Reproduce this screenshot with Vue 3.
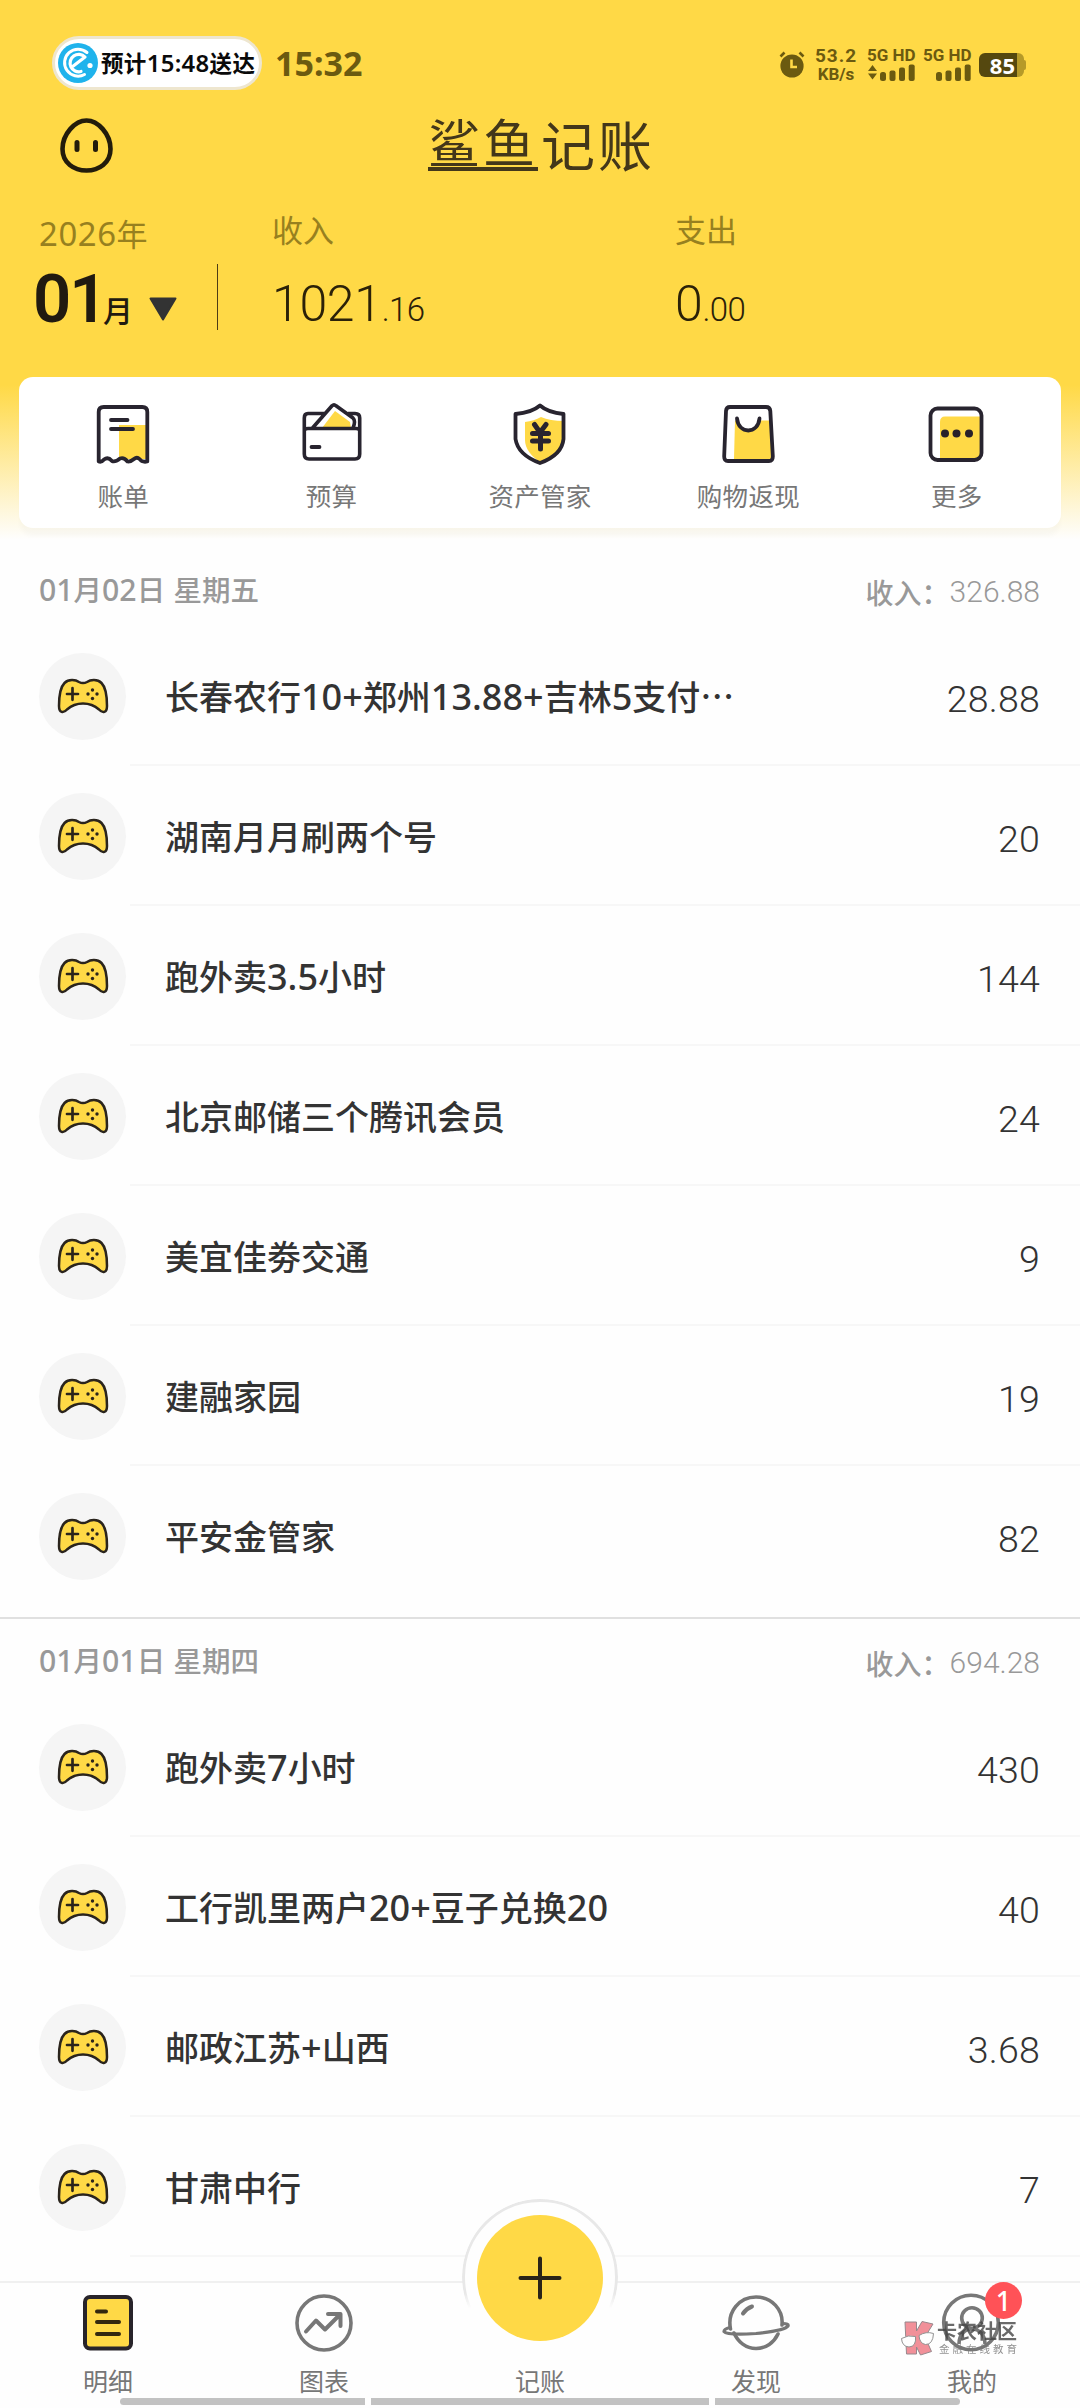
<script setup>
import { h } from 'vue'

// Splits mixed text so that digits and signs get the latin face.
const Mixed = (props) =>
  h(
    'span',
    { class: 'mixed' },
    props.text
      .split(/([0-9+.:]+)/)
      .filter(Boolean)
      .map((part) => (/^[0-9+.:]+$/.test(part) ? h('span', { class: 'latin' }, part) : part))
  )
Mixed.props = ['text']

const days = [
  {
    date: '01月02日 星期五',
    total: '326.88',
    rows: [
      ['长春农行10+郑州13.88+吉林5支付⋯', '28.88'],
      ['湖南月月刷两个号', '20'],
      ['跑外卖3.5小时', '144'],
      ['北京邮储三个腾讯会员', '24'],
      ['美宜佳劵交通', '9'],
      ['建融家园', '19'],
      ['平安金管家', '82'],
    ],
  },
  {
    date: '01月01日 星期四',
    total: '694.28',
    rows: [
      ['跑外卖7小时', '430'],
      ['工行凯里两户20+豆子兑换20', '40'],
      ['邮政江苏+山西', '3.68'],
      ['甘肃中行', '7'],
    ],
  },
]
</script>

<template>
  <div class="page">
    <header class="top">
      <div class="status">
        <div class="pill">
          <svg width="40" height="40" viewBox="0 0 40 40">
            <circle cx="20" cy="20" r="20" fill="#1fb3ec" />
            <path d="M29 9.500 A13.500 13.500 0 1 0 26.500 31.500" fill="none" stroke="#fff" stroke-width="3" stroke-linecap="round" />
            <path d="M14 24 L27 14 A8.700 8.700 0 1 0 23 28.500" fill="none" stroke="#fff" stroke-width="3.200" stroke-linecap="round" stroke-linejoin="round" />
            <circle cx="32" cy="22.500" r="2.600" fill="#fff" />
          </svg>
          <Mixed text="预计15:48送达" />
        </div>
        <span class="clock">15:32</span>
        <div class="sys">
          <svg width="26" height="27" viewBox="0 0 26 27">
            <circle cx="13" cy="15" r="11.600" fill="#6b5a10" />
            <path d="M1.500 5.500 L5.500 1.500 M24.500 5.500 L20.500 1.500" stroke="#6b5a10" stroke-width="2.600" />
            <path d="M12.500 8.500 V16 H18" fill="none" stroke="#ffd946" stroke-width="2.600" />
          </svg>
          <div class="speed"><span>53.2</span><span>KB/s</span></div>
          <div class="sim">
            <span>5G HD</span>
            <svg width="48" height="17" viewBox="0 0 48 17" fill="#6b5a10">
              <path d="M1 7 L5.500 1 L10 7Z M1 9.500 L5.500 15.500 L10 9.500Z" />
              <rect x="13" y="8" width="6" height="9" rx="2.500" />
              <rect x="22.500" y="6.500" width="6" height="10.500" rx="2" />
              <rect x="32" y="3.500" width="6" height="13.500" rx="2" />
              <rect x="41.700" y="0.500" width="6" height="16.500" rx="2" />
            </svg>
          </div>
          <div class="sim">
            <span>5G HD</span>
            <svg width="48" height="17" viewBox="0 0 48 17" fill="#6b5a10">
              <rect x="13" y="8" width="6" height="9" rx="2.500" />
              <rect x="22.500" y="6.500" width="6" height="10.500" rx="2" />
              <rect x="32" y="3.500" width="6" height="13.500" rx="2" />
              <rect x="41.700" y="0.500" width="6" height="16.500" rx="2" />
            </svg>
          </div>
          <div class="battery"><span>85</span><i></i></div>
        </div>
      </div>

      <div class="brand">
        <svg width="53" height="55" viewBox="0 0 53 55">
          <path d="M26.500 2.500 C38 2.500 50.500 16 50.500 31 C50.500 45 39 52.500 26.500 52.500 C14 52.500 2.500 45 2.500 31 C2.500 16 15 2.500 26.500 2.500Z" fill="none" stroke="#231c0b" stroke-width="4.600" />
          <path d="M17 24.500 V31.500 M35.500 24.500 V31.500" stroke="#231c0b" stroke-width="5" stroke-linecap="round" />
        </svg>
        <h1><span class="lined">鲨鱼</span><span>记账</span></h1>
      </div>

      <div class="summary">
        <div class="month">
          <div class="label"><Mixed text="2026年" /></div>
          <div class="pick">
            <b>01</b><em>月</em>
            <svg width="28" height="24" viewBox="0 0 28 24"><path d="M1.500 1.500 H26.500 L14 22.500Z" fill="#333" stroke="#333" stroke-width="2" stroke-linejoin="round" /></svg>
          </div>
        </div>
        <i class="rule"></i>
        <div class="sum income"><div class="label">收入</div><div class="val">1021<small>.16</small></div></div>
        <div class="sum"><div class="label">支出</div><div class="val">0<small>.00</small></div></div>
      </div>

      <div class="card">
        <div class="tool">
          <svg width="60" height="64" viewBox="0 0 60 64">
            <path d="M26 23 H53 V57 H26Z" fill="#ffd946" />
            <path d="M5.700 59.500 V10 Q5.700 5 10.700 5 H49.300 Q54.300 5 54.300 10 V59.500 Q49 60.500 46.500 57 Q44 54.500 41 57 Q37.500 60 34.500 59.500 Q31 55 27 56.500 Q22 60.500 19 59 Q15 54.500 11 57.500 Q8.500 60.500 5.700 59.500Z" fill="none" stroke="#28242f" stroke-width="3.800" stroke-linejoin="round" />
            <path d="M18 18 H34.500 M18 27 H40" stroke="#28242f" stroke-width="3.800" stroke-linecap="round" />
          </svg>
          <span>账单</span>
        </div>
        <div class="tool">
          <svg width="60" height="64" viewBox="0 0 60 64">
            <path d="M20 26 L33 9 L48 20 L49 26Z" fill="#ffd946" />
            <path d="M10.500 26 L30 3.800 Q32 1.800 34 3.800 L51 16 Q54 19 51 26 M24 11.500 H6 Q2.300 11.500 2.300 16 V52 Q2.300 57 7 57 H53 Q57.700 57 57.700 52 V16 Q57.700 11.500 53 11.500 H46 M2.300 29 Q2.300 26.500 6 26.500 H54 Q57.700 26.500 57.700 29" fill="none" stroke="#28242f" stroke-width="3.600" stroke-linejoin="round" />
            <path d="M9.500 45 H17.500" stroke="#28242f" stroke-width="3.800" stroke-linecap="round" />
          </svg>
          <span>预算</span>
        </div>
        <div class="tool">
          <svg width="60" height="64" viewBox="0 0 60 64">
            <path d="M15 20 Q24 19 31 15 Q40 19 54 19 V36 Q53 54 31 61 Q15 50 15 38Z" fill="#ffd946" />
            <path d="M30 3.500 Q38 10.500 53.500 12 V37 Q52 53 30 61 Q8 53 5.500 37 V12 Q22 10.500 30 3.500Z" fill="none" stroke="#28242f" stroke-width="3.800" stroke-linejoin="round" />
            <path d="M24.500 22.500 L30 30.500 L36 22.500 M22.500 31.500 H38.500 M22.500 39 H38.500 M30.500 31 V47" fill="none" stroke="#28242f" stroke-width="5" stroke-linecap="round" />
          </svg>
          <span>资产管家</span>
        </div>
        <div class="tool">
          <svg width="60" height="64" viewBox="0 0 60 64">
            <path d="M17 18.500 H52 L53.500 57 H16Z" fill="#ffd946" />
            <path d="M12 5 H48 Q52 5 52.300 9 L54.800 54 Q55 59 51 59 H10 Q6 59 6.200 54 L8 9 Q8.300 5 12 5Z" fill="none" stroke="#28242f" stroke-width="3.800" />
            <path d="M19 16.500 C20.500 32.500 40 32.500 41.500 16.500" fill="#fff" />
            <path d="M19 16.500 C20.500 32.500 40 32.500 41.500 16.500" fill="none" stroke="#28242f" stroke-width="3.800" stroke-linecap="round" />
          </svg>
          <span>购物返现</span>
        </div>
        <div class="tool">
          <svg width="60" height="64" viewBox="0 0 60 64">
            <path d="M13 57 V20 Q13 14.500 18 14.500 H54 V57Z" fill="#ffd946" />
            <rect x="3.500" y="6.500" width="51" height="51.500" rx="7" fill="none" stroke="#28242f" stroke-width="3.800" />
            <g fill="#28202a"><circle cx="18" cy="31.500" r="4" /><circle cx="29.500" cy="31.500" r="4" /><circle cx="42" cy="31.500" r="4" /></g>
          </svg>
          <span>更多</span>
        </div>
      </div>
    </header>

    <main>
      <section v-for="day in days" :key="day.date" class="day">
        <div class="head">
          <Mixed :text="day.date" />
          <div class="total"><span>收入：</span><b>{{ day.total }}</b></div>
        </div>
        <div v-for="row in day.rows" :key="row[0]" class="row">
          <div class="ava">
            <svg width="52" height="36" viewBox="0 0 52 36">
              <path d="M2 28 C2 18 3.500 9 7.500 5 C12 0.500 19 2 22 4 Q26 6.200 30 4 C33 2 40 0.500 44.500 5 C48.500 9 50 18 50 28 C50 35 45.500 35.500 42 31.500 C33 23.500 19 23.500 10 31.500 C6.500 35.500 2 35 2 28Z" fill="#ffd946" stroke="#2a241c" stroke-width="2.500" stroke-linejoin="round" />
              <path d="M10 16 H21 M15.500 10.200 V21.800" stroke="#2a241c" stroke-width="2.700" stroke-linecap="round" />
              <g fill="#2a241c"><circle cx="35.500" cy="12" r="1.700" /><circle cx="35.500" cy="20.500" r="1.700" /><circle cx="31" cy="16" r="1.700" /><circle cx="40" cy="16" r="1.700" /></g>
            </svg>
          </div>
          <div class="body"><Mixed :text="row[0]" /><b>{{ row[1] }}</b></div>
        </div>
      </section>
    </main>

    <nav>
      <div class="tab">
        <svg width="66" height="60" viewBox="0 0 66 60">
          <rect x="10" y="4" width="46" height="51.500" rx="5" fill="#ffd946" stroke="#28242a" stroke-width="4" />
          <path d="M22 18.500 H31 M22 29 H44 M22 41 H44" stroke="#33280f" stroke-width="4" stroke-linecap="round" />
        </svg>
        <span>明细</span>
      </div>
      <div class="tab">
        <svg width="66" height="60" viewBox="0 0 66 60" fill="none" stroke="#777">
          <circle cx="33" cy="30" r="27" stroke-width="3.600" />
          <path d="M15 38.500 L25 27.500 L34 36.500 L49 21.500 M37 21 H49.500 V33" stroke-width="4" stroke-linecap="round" stroke-linejoin="round" />
        </svg>
        <span>图表</span>
      </div>
      <div class="tab">
        <div class="ring"></div>
        <div class="add">
          <svg width="44" height="44" viewBox="0 0 44 44"><path d="M2.500 22 H41.500 M22 2.500 V41.500" stroke="#2a2418" stroke-width="4" stroke-linecap="round" /></svg>
        </div>
        <span>记账</span>
      </div>
      <div class="tab">
        <svg width="68" height="60" viewBox="0 0 68 60" fill="none" stroke="#777" stroke-width="3.600" stroke-linecap="round">
          <path d="M8.500 36 C5 19 17 4 34 4 C50 4 61.500 17 60 32 M12 40 C16 49 24 55.500 34 55.500 C44 55.500 52 49.500 56 41" />
          <path d="M21 20.500 Q24.500 15.500 30 13.500" stroke-width="4" />
          <path d="M8 34.500 Q2 36 2 38.500 Q5 42.500 34 40.500 Q63 37.500 66 33 Q67 30.500 61 30.500" stroke-width="3.200" />
        </svg>
        <span>发现</span>
      </div>
      <div class="tab">
        <svg width="66" height="60" viewBox="0 0 66 60" fill="none" stroke="#777" stroke-width="3.600">
          <circle cx="32" cy="29.500" r="27.300" />
          <circle cx="33" cy="25" r="10.300" />
          <path d="M20 51 C20 31 46 31 46 51" />
        </svg>
        <span>我的</span>
        <div class="mark">
          <svg width="34" height="36" viewBox="0 0 34 36">
            <path d="M5 2 H16.500 V11 L22 1.500 L33 4 L25 17 L31.500 31.500 L20.500 35 L16.500 27 V34 H6.500Z" fill="#ee7581" stroke="#7d6a70" stroke-width="1" />
            <path d="M1.500 18.500 Q8 14.500 15.500 16.500 Q16.500 26.500 9 27 Q2 26.500 1.500 18.500Z M19 15.500 Q26 11 33.500 13.500 Q33 24.500 25.500 24.500 Q19.500 23.500 19 15.500Z" fill="#fff" stroke="#777" stroke-width="1" />
          </svg>
          <div><strong>卡农社区</strong><span>金融在线教育</span></div>
        </div>
        <div class="badge">1</div>
      </div>
      <div class="bars"><i></i><i class="mid"></i><i></i></div>
    </nav>
  </div>
</template>

<style>
body { margin: 0; background: #fefefe; }
.mixed .latin { font-family: "Noto Sans", sans-serif; font-size: 1.06em; line-height: 1; }
</style>

<style scoped>
.page { width: 1080px; height: 2408px; overflow: hidden; background: #fefefe; font-family: "Noto Sans CJK SC", sans-serif; color: #333; display: flex; flex-direction: column; }
.page svg { display: block; flex: none; }
.top { height: 554px; flex: none; background: linear-gradient(#ffd946 0, #ffd946 385px, #fefefe 540px); }
.status { height: 91px; padding: 36px 52px 0; box-sizing: border-box; display: flex; align-items: flex-start; }
.pill { box-sizing: border-box; width: 210px; height: 54px; border: 3px solid #eee6cf; border-radius: 27px; background: #fff; display: flex; align-items: center; padding-left: 3px; gap: 3px; font-size: 22.500px; letter-spacing: .35px; font-weight: 700; color: #0a0a0a; white-space: nowrap; }
.pill .mixed { line-height: 30px; padding-bottom: 3px; }
.pill :deep(.latin) { font-weight: 600; }
.clock { margin-left: 13px; font: 700 34px/54px "Noto Sans", sans-serif; color: #6b5a10; width: 90px; }
.sys { margin-left: auto; display: flex; align-items: flex-start; color: #6b5a10; padding-top: 10px; margin-right: 2px; }
.sys > svg { margin-top: 5px; }
.speed { display: flex; flex-direction: column; width: 50px; margin-left: 6px; margin-right: 6px; align-items: center; font: 700 19px/18px "Roboto", sans-serif; letter-spacing: 1px; padding-top: 1px; }
.speed span + span { font-size: 17px; line-height: 19px; letter-spacing: 0; }
.sim { width: 48px; margin-right: 8px; font: 700 17px/18px "Roboto", sans-serif; white-space: nowrap; }
.battery { position: relative; margin-top: 7px; width: 38px; height: 24px; border-radius: 6px 0 0 6px; background: #55480f; color: #fff; font: 700 22px/24px "Noto Sans", sans-serif; text-align: right; margin-right: 9px; }
.battery span { position: relative; right: 2px; }
.battery i { position: absolute; left: 38px; top: 0; width: 7px; height: 24px; border-radius: 0 6px 6px 0; background: #b69a28; }
.battery i::after { content: ""; position: absolute; left: 7px; top: 7px; width: 2px; height: 10px; border-radius: 0 2px 2px 0; background: #b69a28; }
.brand { height: 99px; display: flex; align-items: flex-start; padding: 27px 0 0 60px; box-sizing: border-box; }
h1 { margin: 0 0 0 315px; display: flex; font-size: 54px; font-weight: 400; line-height: 52px; letter-spacing: 3px; color: #43371a; }
.lined { border-bottom: 4px solid #43371a; width: 110px; margin-right: 3px; height: 49px; line-height: 45px; font-size: 52px; white-space: nowrap; }
.summary { height: 187px; display: flex; align-items: flex-start; }
.month { width: 217px; box-sizing: border-box; padding: 20px 0 0 39px; }
.label { font-size: 31px; line-height: 46px; height: 46px; color: #97801f; white-space: nowrap; }
.month .label { letter-spacing: .6px; }
.pick { display: flex; align-items: flex-end; margin: 5px 0 0 -6px; height: 70px; }
.pick b { font: 600 67px/64px "Roboto", sans-serif; color: #211a10; letter-spacing: -2px; width: 73px; }
.pick em { font-style: normal; font-weight: 500; font-size: 30px; line-height: 40px; color: #211a10; margin: 0 0 2px -3px; width: 30px; }
.pick svg { margin: 0 0 10px 16px; }
.rule { width: 1px; height: 66px; background: #4d3c14; margin-top: 74px; }
.sum { padding-top: 16px; width: 403px; }
.income { margin-left: 54px; }
.val { font: 300 50px/60px "Roboto", sans-serif; color: #2b2108; margin-top: 22px; letter-spacing: -.3px; }
.val small { font-size: 33px; letter-spacing: -.6px; }
.card { margin: 0 19px; height: 151px; background: #fff; border-radius: 14px; display: flex; box-shadow: 0 9px 5px -1px rgba(0, 0, 0, .025); }
.tool { flex: 1; display: flex; flex-direction: column; align-items: center; padding-top: 25px; }
.tool span { font-size: 25.500px; line-height: 36px; margin-top: 11px; color: #777; letter-spacing: .3px; }
.head { height: 72px; padding: 0 40px 0 39px; display: flex; align-items: center; justify-content: space-between; font-size: 28.500px; color: #999; }
.head > .mixed { padding-bottom: 4px; font-weight: 500; word-spacing: 2px; }
.total { display: flex; align-items: center; font-size: 28px; font-weight: 500; padding-top: 4px; }
.total b { font: 300 30px/40px "Roboto", sans-serif; }
.day + .day { margin-top: 11px; border-top: 2px solid #e0e0e0; padding-top: 6px; }
.row { height: 140px; display: flex; align-items: center; padding-left: 39px; }
.ava { width: 87px; height: 87px; border-radius: 50%; background: #f5f5f5; display: flex; align-items: center; justify-content: center; margin-right: 4px; flex: none; }
.body { flex: 1; height: 138px; border-bottom: 2px solid #f7f7f7; display: flex; align-items: center; justify-content: space-between; padding: 0 40px 0 35px; font-size: 34px; font-weight: 500; white-space: nowrap; }
.day:first-child .row:last-child .body { border-color: transparent; }
.body b { font: 300 37.500px/44px "Roboto", sans-serif; letter-spacing: .2px; padding-top: 8px; }
nav { position: relative; margin-top: 24px; height: 127px; box-sizing: border-box; border-top: 2px solid #f0f0f0; display: flex; flex: none; }
.tab { flex: 1; position: relative; display: flex; flex-direction: column; align-items: center; justify-content: flex-start; padding-top: 10px; height: 115px; box-sizing: border-box; }
.tab > span { font-size: 25px; line-height: 36px; color: #777; position: absolute; top: 79px; }
.ring { position: absolute; left: 30px; top: -84px; width: 156px; height: 156px; box-sizing: border-box; border: 3px solid #e8e8e8; border-radius: 50%; background: #fefefe; -webkit-mask-image: linear-gradient(#000 60%, transparent 70%); mask-image: linear-gradient(#000 60%, transparent 70%); }
.add { position: absolute; left: 45px; top: -68px; width: 126px; height: 126px; border-radius: 50%; background: #ffd946; display: flex; align-items: center; justify-content: center; }
.badge { position: absolute; left: 121px; top: -1px; width: 37px; height: 37px; border-radius: 50%; background: #ff5257; color: #fff; font: 500 27px/37px "Noto Sans", sans-serif; text-align: center; }
.mark { position: absolute; left: 36px; top: 37px; display: flex; gap: 3px; opacity: .8; }
.mark div { display: flex; flex-direction: column; color: #444; }
.mark strong { font-size: 20px; line-height: 20px; font-weight: 700; white-space: nowrap; margin-top: 1px; }
.mark span { font-size: 10.500px; line-height: 12px; letter-spacing: 3px; white-space: nowrap; margin: 2px 0 0 2px; color: #777; }
.bars { position: absolute; left: 120px; right: 120px; top: 115px; display: flex; gap: 6px; }
.bars i { height: 7px; width: 245px; background: #c2c2c2; border-radius: 4px 0 0 4px; }
.bars i:last-child { border-radius: 0 4px 4px 0; }
.bars .mid { width: 338px; border-radius: 0; }
</style>
